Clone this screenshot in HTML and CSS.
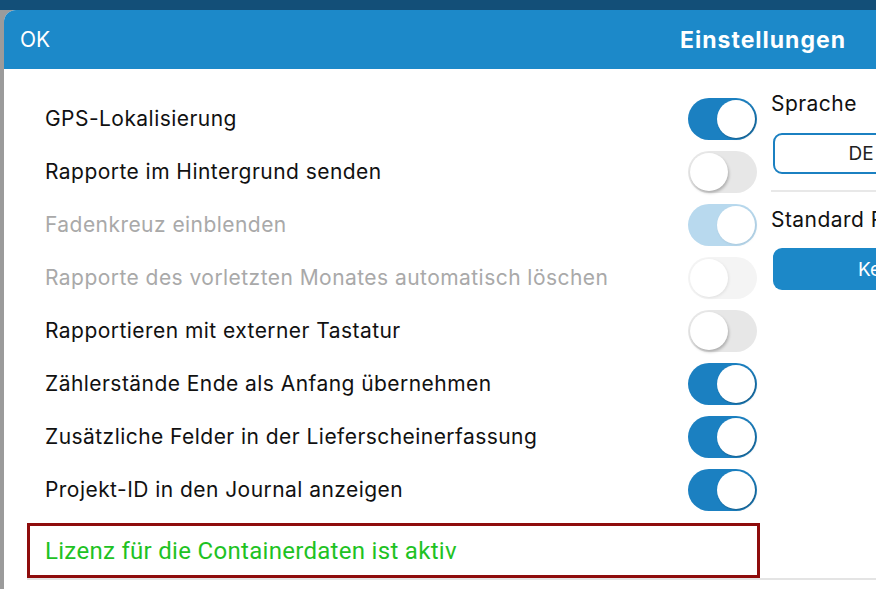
FILE: index.html
```html
<!DOCTYPE html>
<html lang="de">
<head>
    <meta charset="UTF-8">
    <meta name="viewport" content="width=device-width, initial-scale=1.0">
    <title>Einstellungen</title>
    <link rel="stylesheet" href="styles.css">
</head>
<body>
    <div class="topbar"></div>
    <div class="modal">
        <div class="header">
            <span class="ok">OK</span>
            <span class="title">Einstellungen</span>
        </div>
        <div class="content">
            <div class="settings">
                <div class="row"><span>GPS-Lokalisierung</span><span class="switch on"></span></div>
                <div class="row"><span>Rapporte im Hintergrund senden</span><span class="switch"></span></div>
                <div class="row disabled"><span>Fadenkreuz einblenden</span><span class="switch on"></span></div>
                <div class="row disabled"><span>Rapporte des vorletzten Monates automatisch löschen</span><span class="switch"></span></div>
                <div class="row"><span>Rapportieren mit externer Tastatur</span><span class="switch"></span></div>
                <div class="row"><span>Zählerstände Ende als Anfang übernehmen</span><span class="switch on"></span></div>
                <div class="row"><span>Zusätzliche Felder in der Lieferscheinerfassung</span><span class="switch on"></span></div>
                <div class="row"><span>Projekt-ID in den Journal anzeigen</span><span class="switch on"></span></div>
                <div class="license">Lizenz für die Containerdaten ist aktiv</div>
            </div>
            <div class="side">
                <div class="side-label">Sprache</div>
                <div class="lang-btn">DE</div>
                <div class="divider"></div>
                <div class="side-label">Standard Rapport</div>
                <div class="blue-btn">Keine</div>
            </div>
        </div>
    </div>
</body>
</html>
```
FILE: styles.css
```css
body {
    margin: 0;
    background: #9b9b9b;
    font-family: Inter, "Noto Sans", sans-serif;
    height: 589px;
    overflow: hidden;
}
.topbar {
    height: 10px;
    background: #134f78;
}
.modal {
    margin-left: 4px;
    background: #fff;
    border-radius: 12px 0 0 0;
    overflow: hidden;
    height: 579px;
}
.header {
    height: 59px;
    background: #1c89c9;
    color: #fff;
    display: flex;
    align-items: center;
    justify-content: space-between;
    padding: 0 30px 0 16px;
}
.ok {
    font-size: 21px;
}
.title {
    font-size: 23px;
    font-weight: 700;
    letter-spacing: 1px;
}
.content {
    display: flex;
    gap: 11px;
}
.settings {
    margin-left: 23px;
    width: 733px;
    padding-top: 23px;
    flex-shrink: 0;
    position: relative;
}
.settings::after {
    content: "";
    position: absolute;
    left: 0;
    right: -200px;
    bottom: -2px;
    height: 2px;
    background: #e4e4e4;
}
.row {
    height: 53px;
    display: flex;
    align-items: center;
    justify-content: space-between;
    padding: 0 3px 0 18px;
    font-size: 21px;
    letter-spacing: 0.45px;
    color: #111;
}
.row.disabled {
    color: #a9a9a9;
}
.switch {
    width: 69px;
    height: 42px;
    border-radius: 21px;
    background: #e7e7e7;
    position: relative;
}
.switch::after {
    content: "";
    position: absolute;
    top: 2px;
    left: 2px;
    width: 38px;
    height: 38px;
    border-radius: 50%;
    background: #fff;
    box-shadow: 1px 2px 3px rgba(0, 0, 0, 0.25);
}
.switch.on {
    background: #1b80c1;
}
.switch.on::after {
    left: 29px;
    box-shadow: 1px 1px 2px rgba(0, 0, 0, 0.3);
}
.disabled .switch {
    background: #f4f4f4;
}
.disabled .switch::after {
    box-shadow: 1px 1px 3px rgba(0, 0, 0, 0.08);
}
.disabled .switch.on {
    background: #b8d9ee;
}
.license {
    margin-top: 7px;
    height: 49px;
    border: 3px solid #8e0c0c;
    padding-left: 15px;
    display: flex;
    align-items: center;
    font-family: Roboto, sans-serif;
    font-size: 24px;
    letter-spacing: 0.3px;
    color: #1ec223;
}
.side {
    padding-top: 23px;
    width: 178px;
    flex-shrink: 0;
}
.side-label {
    font-size: 21px;
    letter-spacing: 0.45px;
    line-height: 24px;
    color: #111;
    white-space: nowrap;
}
.lang-btn {
    margin: 17px 0 0 2px;
    height: 37px;
    border: 2px solid #1b80c1;
    border-radius: 9px;
    display: flex;
    align-items: center;
    justify-content: center;
    font-size: 19px;
    color: #222;
}
.divider {
    margin: 16px 0 16px 0;
    height: 2px;
    background: #e8e8e8;
}
.blue-btn {
    margin: 16px 0 0 2px;
    height: 42px;
    border-radius: 9px;
    background: #1c88c8;
    color: #fff;
    font-size: 19px;
    display: flex;
    align-items: center;
    padding-left: 85px;
}
```
